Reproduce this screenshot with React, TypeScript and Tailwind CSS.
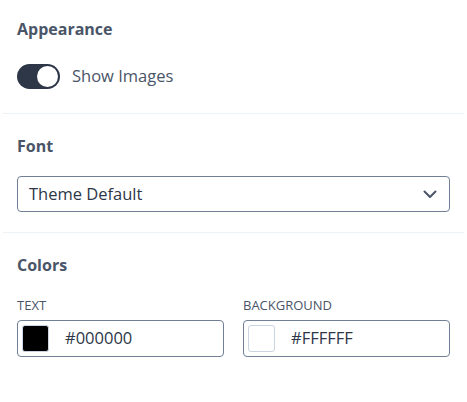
import { useState } from 'react';

const font = { fontFamily: '"Open Sans", "Noto Sans", sans-serif' };

const ColorField = ({ label, value, swatch }: { label: string; value: string; swatch: string }) => (
  <div className="flex-1">
    <div className="text-[13px] leading-4 uppercase text-[#4a5568]">{label}</div>
    <div className="mt-[7px] flex h-[37px] items-center rounded-[4px] border border-[#718096] bg-white px-[4px]">
      <span className={`h-[27px] w-[27px] rounded-[3px] border border-[#cbd5e0] ${swatch}`} />
      <span className="ml-[16px] text-[16.5px] text-[#2d3748]">{value}</span>
    </div>
  </div>
);

export default function App() {
  const [showImages, setShowImages] = useState(true);

  return (
    <div className="w-[467px] bg-white" style={font}>
      {/* Appearance */}
      <div className="mx-[3px] border-b border-[#edf2f7] px-[14px] pt-[17px] pb-[24px]">
        <h2 className="text-[16px] leading-6 font-bold text-[#4a5568]">Appearance</h2>
        <label className="mt-[23px] flex items-center gap-[12px]">
          <button
            onClick={() => setShowImages(!showImages)}
            className={`flex h-[25px] w-[43px] items-center rounded-full px-[2px] ${showImages ? 'justify-end bg-[#2d3748]' : 'justify-start bg-[#cbd5e0]'}`}
          >
            <span className="h-[21px] w-[21px] rounded-full bg-white" />
          </button>
          <span className="text-[16.5px] text-[#4a5568]">Show Images</span>
        </label>
      </div>

      {/* Font */}
      <div className="mx-[3px] border-b border-[#edf2f7] px-[14px] pt-[20px] pb-[20px]">
        <h2 className="text-[16px] leading-6 font-bold text-[#4a5568]">Font</h2>
        <div className="mt-[18px] flex h-[36px] items-center justify-between rounded-[4px] border border-[#718096] pl-[11px] pr-[12px]">
          <span className="text-[16.5px] text-[#2d3748]">Theme Default</span>
          <svg width="14" height="9" viewBox="0 0 14 9" fill="none">
            <path d="M1.5 1.5 7 7l5.5-5.5" stroke="#4a5568" strokeWidth="2" strokeLinecap="round" strokeLinejoin="round" />
          </svg>
        </div>
      </div>

      {/* Colors */}
      <div className="mx-[3px] px-[14px] pt-[20px] pb-[45px]">
        <h2 className="text-[16px] leading-6 font-bold text-[#4a5568]">Colors</h2>
        <div className="mt-[20px] flex gap-[19px]">
          <ColorField label="Text" value="#000000" swatch="bg-black" />
          <ColorField label="Background" value="#FFFFFF" swatch="bg-white" />
        </div>
      </div>
    </div>
  );
}
